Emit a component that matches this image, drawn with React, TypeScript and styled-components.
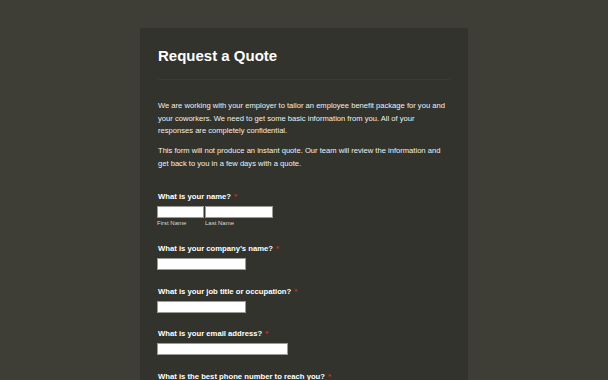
import React from 'react';
import styled, { createGlobalStyle } from 'styled-components';

const GlobalStyle = createGlobalStyle`
  html, body {
    margin: 0;
    padding: 0;
    background: #3e3e37;
    font-family: "Liberation Sans", Arial, sans-serif;
    overflow: hidden;
  }
`;

const Page = styled.div`
  width: 608px;
  height: 380px;
  padding-top: 28px;
  box-sizing: border-box;
  display: flex;
  justify-content: center;
`;

const Card = styled.div`
  width: 328px;
  background: #33332d;
  padding: 0 18px;
  box-sizing: border-box;
  color: #f2f2ee;
`;

const Header = styled.div`
  padding: 19px 0 14px;
  border-bottom: 1px solid #3b3b35;
`;

const Title = styled.h1`
  margin: 0;
  font-size: 15px;
  line-height: 18px;
  font-weight: bold;
  color: #ffffff;
`;

const Intro = styled.div`
  padding-top: 20px;
`;

const Para = styled.p`
  margin: 0 0 7.5px;
  font-size: 7.6px;
  line-height: 12.5px;
  color: #f0f0ec;
`;

const Form = styled.div`
  padding-top: 14px;
  display: flex;
  flex-direction: column;
  gap: 16.5px;
`;

const Field = styled.div`
  display: flex;
  flex-direction: column;
  align-items: flex-start;
`;

const Label = styled.label`
  font-size: 7.7px;
  line-height: 10px;
  font-weight: bold;
  color: #ffffff;
  margin-bottom: 4px;
`;

const Req = styled.span`
  color: #d22a2a;
  margin-left: 3px;
`;

const Input = styled.input<{ $w: number }>`
  width: ${p => p.$w}px;
  height: 12px;
  box-sizing: border-box;
  border: 1px solid #9a9a96;
  background: #ffffff;
  margin: 0 0 0 -1px;
  padding: 0 2px;
  display: block;
`;

const Row = styled.div`
  display: flex;
  gap: 2px;
`;

const SubField = styled.div`
  display: flex;
  flex-direction: column;
`;

const SubLabel = styled.span`
  font-size: 6px;
  line-height: 7px;
  margin: 2px 0 1px -1px;
  color: #d8d8d2;
`;

export default function App() {
  return (
    <>
      <GlobalStyle />
      <Page>
        <Card>
          <Header>
            <Title>Request a Quote</Title>
          </Header>
          <Intro>
            <Para>
              We are working with your employer to tailor an employee benefit package for you and
              your coworkers. We need to get some basic information from you. All of your
              responses are completely confidential.
            </Para>
            <Para>
              This form will not produce an instant quote. Our team will review the information and
              get back to you in a few days with a quote.
            </Para>
          </Intro>
          <Form>
            <Field>
              <Label>What is your name?<Req>*</Req></Label>
              <Row>
                <SubField>
                  <Input $w={47} />
                  <SubLabel>First Name</SubLabel>
                </SubField>
                <SubField>
                  <Input $w={68} />
                  <SubLabel>Last Name</SubLabel>
                </SubField>
              </Row>
            </Field>
            <Field>
              <Label>What is your company’s name?<Req>*</Req></Label>
              <Input $w={89} />
            </Field>
            <Field>
              <Label>What is your job title or occupation?<Req>*</Req></Label>
              <Input $w={89} />
            </Field>
            <Field>
              <Label>What is your email address?<Req>*</Req></Label>
              <Input $w={131} />
            </Field>
            <Field>
              <Label>What is the best phone number to reach you?<Req>*</Req></Label>
              <Input $w={89} />
            </Field>
          </Form>
        </Card>
      </Page>
    </>
  );
}
